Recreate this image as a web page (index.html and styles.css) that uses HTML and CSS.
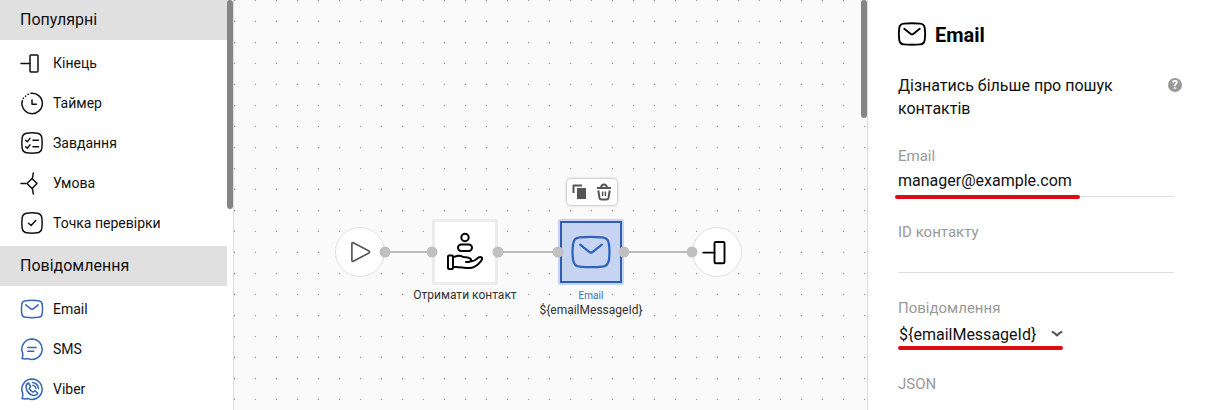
FILE: index.html
```html
<!DOCTYPE html>
<html lang="uk">
<head>
    <meta charset="UTF-8">
    <meta name="viewport" content="width=device-width, initial-scale=1">
    <title>Email</title>
    <link rel="stylesheet" href="styles.css">
</head>
<body>
    <!-- Shared icons -->
    <svg class="sprite" aria-hidden="true">
        <symbol id="icon-end" viewBox="0 0 24 24">
            <path d="M1 12.500h9"/>
            <rect x="10" y="4" width="8" height="17" rx="1"/>
        </symbol>
        <symbol id="icon-email" viewBox="0 0 24 24">
            <path d="M5.500 3.700Q12 3 18.500 3.700Q21.700 4 22.200 7.200Q22.900 12 22.200 16.800Q21.700 20 18.500 20.300Q12 21 5.500 20.300Q2.300 20 1.800 16.800Q1.100 12 1.800 7.200Q2.300 4 5.500 3.700Z"/>
            <path d="M5.800 7.800l5 4Q12 12.800 13.200 11.800L18.200 7.800"/>
        </symbol>
    </svg>

    <div class="app">
        <!-- Palette of blocks -->
        <nav class="sidebar">
            <div class="palette">
                <h2 class="group-title">Популярні</h2>
                <ul class="group">
                    <li><button class="item" type="button">
                        <svg class="icon" viewBox="0 0 24 24"><use href="#icon-end"/></svg>Кінець
                    </button></li>
                    <li><button class="item" type="button">
                        <svg class="icon" viewBox="0 0 24 24">
                            <path d="M11 2.300A10.200 10.200 0 1 1 2.300 9.800"/>
                            <path d="M3.300 7.400l.2-.3M5.500 5.200l.2-.2M8 3.300l.3-.1"/>
                            <path d="M12 9V13.300h4.300"/>
                        </svg>Таймер
                    </button></li>
                    <li><button class="item" type="button">
                        <svg class="icon" viewBox="0 0 24 24">
                            <path d="M6.500 2.200Q12 1.300 17.500 2.200Q21 2.800 21.800 6.500Q22.600 12 21.800 17.500Q21 21.200 17.500 21.800Q12 22.700 6.500 21.800Q3 21.200 2.200 17.500Q1.400 12 2.200 6.500Q3 2.800 6.500 2.200Z"/>
                            <path d="M5.700 9.300l1.600 1.400L10 7.400M13 9.200h5.500M5.700 15.800l1.600 1.400L10 13.900M13 15.800h5.500"/>
                        </svg>Завдання
                    </button></li>
                    <li><button class="item" type="button">
                        <svg class="icon" viewBox="0 0 24 24">
                            <path d="M1 12.500h5M12.500 7l.8-5M12.500 18l.8 5"/>
                            <path d="M12 7.500l5 5-5 5-5-5z"/>
                        </svg>Умова
                    </button></li>
                    <li><button class="item" type="button">
                        <svg class="icon" viewBox="0 0 24 24">
                            <path d="M6.500 2.200Q12 1.300 17.500 2.200Q21 2.800 21.800 6.500Q22.600 12 21.800 17.500Q21 21.200 17.500 21.800Q12 22.700 6.500 21.800Q3 21.200 2.200 17.500Q1.400 12 2.200 6.500Q3 2.800 6.500 2.200Z"/>
                            <path d="M8.500 12.300l2.600 2.200 4.600-5"/>
                        </svg>Точка перевірки
                    </button></li>
                </ul>

                <h2 class="group-title">Повідомлення</h2>
                <ul class="group">
                    <li><button class="item item-message" type="button">
                        <svg class="icon" viewBox="0 0 24 24"><use href="#icon-email"/></svg>Email
                    </button></li>
                    <li><button class="item item-message" type="button">
                        <svg class="icon" viewBox="0 0 24 24">
                            <path d="M12 2a10.200 10.200 0 1 1-4 19.600Q5 22.300 2 21.600Q3.200 19 2.600 16A10.200 10.200 0 0 1 12 2Z"/>
                            <path d="M7.800 10.400h8.400M7.800 14.200h6"/>
                        </svg>SMS
                    </button></li>
                    <li><button class="item item-message" type="button">
                        <svg class="icon" viewBox="0 0 24 24">
                            <path d="M12 2a10.200 10.200 0 1 1-4 19.600Q5 22.300 2 21.600Q3.200 19 2.600 16A10.200 10.200 0 0 1 12 2Z"/>
                            <path d="M8.500 6Q5.700 7.200 6 10.500C6.800 14.500 9.500 17.700 13.500 18.500Q16.500 18.600 17.800 16L14.700 13.700L13 15.200Q10.200 13.800 9.200 11.200L10.600 9.500L8.500 6Z"/>
                            <path d="M12.600 5.600Q17.800 6.400 18.500 11.600M12.900 8.200Q15.400 8.800 16 11.200"/>
                        </svg>Viber
                    </button></li>
                </ul>
            </div>
            <div class="scrollbar scrollbar-palette"></div>
        </nav>

        <!-- Workflow diagram -->
        <main class="canvas">
            <svg class="links" aria-hidden="true">
                <path d="M151 252h47M264 252h60M390 252h68"/>
            </svg>

            <div class="node round start">
                <svg viewBox="0 0 24 24"><path d="M4.500 4.200v15.600q.1 1.400 1.300.8L20.300 12.900q1.200-.9 0-1.800L5.800 3.400q-1.200-.6-1.300.8z"/></svg>
            </div>
            <div class="node block contact">
                <svg viewBox="0 0 36 36">
                    <circle cx="18" cy="3.500" r="3.700"/>
                    <rect x="11" y="10.500" width="14" height="6.500" rx="3.200"/>
                    <rect x="1" y="21.500" width="5" height="13.500" rx="1"/>
                    <path d="M6 23.500Q10 21 14 22Q15.500 23.300 19 23.200Q24 23.500 24.300 26.500Q23.500 28.200 19 28M24.300 27.300Q27.500 27.500 30 24.700Q32.500 22.200 34.500 23.300Q36 24.500 33.800 27.300C29.500 32.700 26 34 22 34C16 34 13 32.500 6 33"/>
                </svg>
            </div>
            <div class="node caption contact-caption">Отримати контакт</div>

            <div class="node block email">
                <svg viewBox="0 0 24 24"><use href="#icon-email"/></svg>
            </div>
            <div class="node caption email-caption">
                <span class="kind">Email</span>
                <span>${emailMessageId}</span>
            </div>
            <div class="node toolbar">
                <button type="button" aria-label="Копіювати">
                    <svg viewBox="0 0 20 20"><path d="M3.500 11V3.500H12"/><path class="solid" d="M7 6h9v11H7z"/></svg>
                </button>
                <button type="button" aria-label="Видалити">
                    <svg viewBox="0 0 20 20"><path d="M3 6h14M7 5.500Q7.500 2.500 10 2.500T13 5.500M4.300 8.500l1.200 7.500Q5.900 17.500 7.500 17.500h5Q14.100 17.500 14.500 16l1.200-7.500"/><path class="thin" d="M8.600 9.500v4.500M11.400 9.500v4.500"/></svg>
                </button>
            </div>

            <div class="node round finish">
                <svg viewBox="0 0 24 24"><use href="#icon-end"/></svg>
            </div>

            <svg class="ports" aria-hidden="true">
                <circle cx="151" cy="252" r="5.500"/>
                <circle cx="198" cy="252" r="5.500"/>
                <circle cx="264" cy="252" r="5.500"/>
                <circle cx="324" cy="252" r="5.500"/>
                <circle cx="390" cy="252" r="5.500"/>
                <circle cx="458" cy="252" r="5.500"/>
            </svg>
            <div class="scrollbar scrollbar-canvas"></div>
        </main>

        <!-- Block settings -->
        <aside class="panel">
            <h1 class="panel-title">
                <svg viewBox="0 0 24 24"><use href="#icon-email"/></svg>Email
            </h1>
            <div class="about">
                <p>Дізнатись більше про пошук контактів</p>
                <button class="help" type="button" aria-label="Довідка">?</button>
            </div>
            <div class="field marked">
                <label for="email">Email</label>
                <input id="email" type="text" value="manager@example.com">
            </div>
            <div class="field">
                <label for="contact-id">ID контакту</label>
                <input id="contact-id" type="text">
            </div>
            <div class="field">
                <label for="message">Повідомлення</label>
                <div class="picker">
                    <select id="message">
                        <option>${emailMessageId}</option>
                    </select>
                    <svg viewBox="0 0 12 12"><path d="M1.500 4Q3.500 4.500 6 7.500Q8.500 4.500 10.500 4"/></svg>
                </div>
            </div>
            <div class="field">
                <label for="json">JSON</label>
                <input id="json" type="text">
            </div>
        </aside>
    </div>
</body>
</html>
```
FILE: styles.css
```css
* {
    box-sizing: border-box;
}

body {
    margin: 0;
    font-family: Roboto, Arial, sans-serif;
    font-size: 16px;
    color: #111;
    background-color: #fff;
}

button, input, select {
    margin: 0;
    padding: 0;
    border: 0;
    background: none;
    font: inherit;
    color: inherit;
}

svg {
    fill: none;
    stroke: currentColor;
    stroke-width: 1.5;
    stroke-linecap: round;
    stroke-linejoin: round;
}

.sprite {
    display: none;
}

.app {
    display: flex;
    height: 100vh;
    overflow: hidden;
}

/* Palette */
.sidebar {
    display: flex;
    flex: none;
    width: 234px;
    border-right: 1px solid #ddd;
}

.palette {
    flex: 1;
}

.group-title {
    margin: 0;
    padding-left: 20px;
    background-color: #e0e0e0;
    font-size: 16px;
    font-weight: 400;
    line-height: 40px;
}

.group {
    margin: 0;
    padding: 3px 0;
    list-style: none;
}

.item {
    display: flex;
    align-items: center;
    gap: 9px;
    width: 100%;
    height: 40px;
    padding-left: 20px;
    font-size: 14px;
    cursor: pointer;
}

.icon {
    width: 24px;
    height: 24px;
}

.item-message .icon {
    color: #3568b8;
}

.scrollbar {
    width: 6px;
    border-radius: 3px;
    background-color: #858585;
}

.scrollbar-palette {
    height: 209px;
}

/* Diagram */
.canvas {
    position: relative;
    flex: 1;
    overflow: hidden;
    background-color: #fafafa;
    background-image: conic-gradient(from 270deg at 1px 1px, #888 90deg, transparent 0);
    background-size: 21px 21px;
}

.links, .ports {
    position: absolute;
    top: 0;
    left: 0;
    width: 100%;
    height: 100%;
    pointer-events: none;
}

.links {
    stroke: #bbb;
    stroke-width: 2;
}

.ports {
    fill: #c0c0c0;
    stroke: none;
}

.node {
    position: absolute;
}

.round, .block {
    display: flex;
    align-items: center;
    justify-content: center;
    background-color: #fff;
}

.round {
    top: 227px;
    width: 50px;
    height: 50px;
    border: 1px solid #e0e0e0;
    border-radius: 50%;
}

.start {
    left: 101px;
    color: #555;
}

.start svg {
    width: 26px;
    height: 26px;
}

.finish {
    left: 458px;
    color: #000;
}

.finish svg {
    width: 30px;
    height: 30px;
}

.block {
    top: 219px;
    width: 66px;
    height: 66px;
    border: 3px solid #ececec;
    border-radius: 2px;
}

.contact {
    left: 198px;
    color: #000;
}

.contact svg {
    width: 36px;
    height: 36px;
    overflow: visible;
    stroke-width: 2;
}

.email {
    left: 324px;
    border: 2px solid #c6d5f1;
    background-color: #c6d4f1;
    box-shadow: inset 0 0 0 2px #2f5fb0;
    color: #2f63bb;
}

.email svg {
    width: 42px;
    height: 42px;
    stroke-width: 1.3;
}

.caption {
    display: flex;
    flex-direction: column;
    align-items: center;
    top: 288px;
    width: 126px;
    font-size: 12px;
    line-height: 15px;
    color: #333;
}

.contact-caption {
    left: 168px;
}

.email-caption {
    left: 294px;
}

.kind {
    font-size: 10px;
    color: #3f6bc0;
}

.toolbar {
    display: flex;
    align-items: center;
    justify-content: center;
    gap: 4px;
    top: 179px;
    left: 333px;
    width: 50px;
    height: 26px;
    border-radius: 4px;
    background-color: #fff;
    box-shadow: 0 0 3px rgba(0, 0, 0, 0.4);
    color: #555;
}

.toolbar button {
    height: 20px;
    cursor: pointer;
}

.toolbar svg {
    width: 20px;
    height: 20px;
    stroke-width: 2;
    stroke-linecap: butt;
}

.toolbar .solid {
    fill: currentColor;
    stroke: none;
}

.toolbar .thin {
    stroke-width: 1.5;
}

.scrollbar-canvas {
    position: absolute;
    top: 0;
    right: 0;
    height: 118px;
}

/* Settings */
.panel {
    flex: none;
    width: 340px;
    padding: 20px 33px 0 30px;
    border-left: 1px solid #ddd;
}

.panel-title {
    display: flex;
    align-items: center;
    gap: 8px;
    margin: 0;
    font-size: 20px;
    font-weight: 700;
    line-height: 30px;
    color: #000;
}

.panel-title svg {
    width: 30px;
    height: 30px;
    margin-left: -1px;
    margin-top: -2px;
}

.about {
    display: flex;
    justify-content: space-between;
    margin: 24px -8px 26px 0;
}

.about p {
    width: 230px;
    margin: 0;
    line-height: 23px;
}

.help {
    width: 14px;
    height: 14px;
    margin-top: 4px;
    border-radius: 50%;
    background-color: #999;
    color: #fff;
    font-size: 12px;
    font-weight: 700;
    line-height: 14px;
}

.field {
    position: relative;
    height: 51px;
    margin-bottom: 25px;
}

.field label {
    display: block;
    font-size: 15px;
    line-height: 20px;
    color: #999;
}

.field input {
    display: block;
    width: 100%;
    height: 31px;
    padding-bottom: 2px;
    border-bottom: 1px solid #ddd;
}

/* Red underline below the filled values */
.marked::after, .picker::after {
    content: "";
    position: absolute;
    height: 4px;
    border-radius: 2px;
    background-color: #dc0c10;
}

.marked::after {
    bottom: -2px;
    left: -3px;
    width: 185px;
}

.picker {
    position: relative;
    display: flex;
    align-items: center;
    width: 165px;
    height: 32px;
}

.picker::after {
    bottom: 0;
    left: 0;
    width: 100%;
}

.picker select {
    flex: 1;
    height: 32px;
    padding-left: 1px;
    appearance: none;
}

.picker svg {
    position: absolute;
    right: 0;
    width: 12px;
    height: 12px;
    stroke: #555;
    stroke-width: 2;
    pointer-events: none;
}
```
